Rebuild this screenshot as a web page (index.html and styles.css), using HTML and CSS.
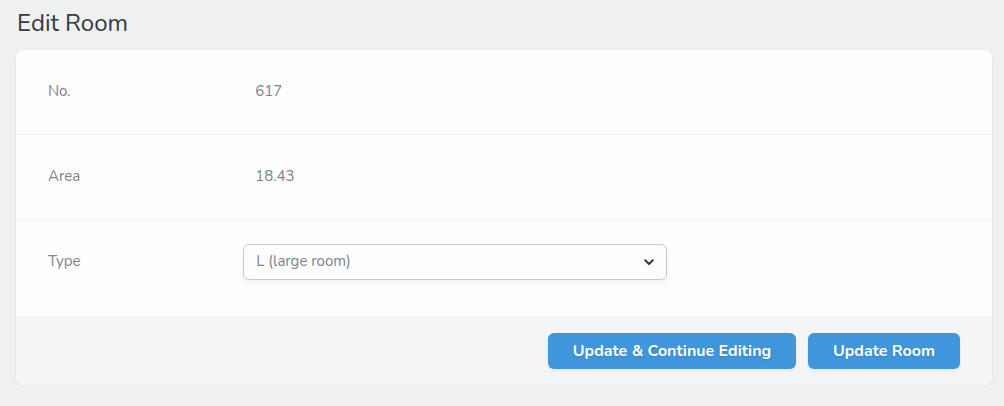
FILE: index.html
```html
<!DOCTYPE html>
<html>
<head>
<meta charset="utf-8">
<link rel="stylesheet" href="styles.css">
</head>
<body>
<main class="page">
  <h1 class="title">Edit Room</h1>
  <div class="card">
    <div class="row">
      <div class="label">No.</div>
      <div class="field"><div class="value">617</div></div>
    </div>
    <div class="row">
      <div class="label">Area</div>
      <div class="field"><div class="value">18.43</div></div>
    </div>
    <div class="row row-last">
      <div class="label">Type</div>
      <div class="field">
        <div class="select">
          <span>L (large room)</span>
          <svg class="chev" width="10" height="7" viewBox="0 0 10 7"><path d="M1.2 1.3 L5 5 L8.8 1.3" fill="none" stroke="#35393c" stroke-width="2" stroke-linecap="round" stroke-linejoin="round"/></svg>
        </div>
      </div>
    </div>
    <div class="footer">
      <button class="btn btn-wide">Update &amp; Continue Editing</button>
      <button class="btn btn-narrow">Update Room</button>
    </div>
  </div>
</main>
</body>
</html>
```
FILE: styles.css
```css
html, body {
  margin: 0;
  padding: 0;
  background: #eff0f0;
  font-family: "Nunito", "Lato", "Noto Sans", sans-serif;
}
.page {
  padding: 9px 12px 0 16px;
}
.title {
  margin: 0 0 12px 1px;
  font-size: 24px;
  font-weight: 400;
  line-height: 29px;
  color: #353a40;
}
.card {
  background: #fdfdfd;
  border-radius: 8px;
  box-shadow: 0 2px 4px rgba(0,0,0,0.06);
  overflow: hidden;
}
.row {
  display: flex;
  border-bottom: 1px solid #eff1f3;
  height: 84px;
  align-items: flex-start;
}
.row-last {
  height: 96px;
}
.label {
  width: 20%;
  box-sizing: border-box;
  padding: 24px 32px;
  line-height: 34px;
  font-size: 15px;
  color: #7c848c;
}
.field {
  width: 50%;
  box-sizing: border-box;
  padding: 24px 32px;
}
.value {
  height: 36px;
  line-height: 34px;
  padding: 0 12px;
  font-size: 15px;
  color: #7c848c;
}
.select {
  height: 36px;
  box-sizing: border-box;
  border: 1px solid #c0ccd6;
  border-radius: 6px;
  box-shadow: 0 2px 4px rgba(0,0,0,0.06);
  display: flex;
  align-items: center;
  justify-content: space-between;
  padding: 0 12px 0 12px;
  font-size: 15px;
  color: #7c848c;
  background: #fdfdfd;
}
.select span { position: relative; top: -1px; }
.chev { display: block; }
.footer {
  background: #f4f5f7;
  display: flex;
  justify-content: flex-end;
  gap: 12px;
  padding: 16px 32px;
}
.btn {
  height: 36px;
  border: none;
  border-radius: 6px;
  background: #4096da;
  color: #ffffff;
  font-family: inherit;
  font-weight: 700;
  font-size: 16px;
  text-shadow: 0 1px 2px rgba(0,0,0,0.12);
  box-shadow: 0 2px 4px rgba(0,0,0,0.06);
  padding: 0;
}
.btn-wide { width: 248px; }
.btn-narrow { width: 152px; }
```
